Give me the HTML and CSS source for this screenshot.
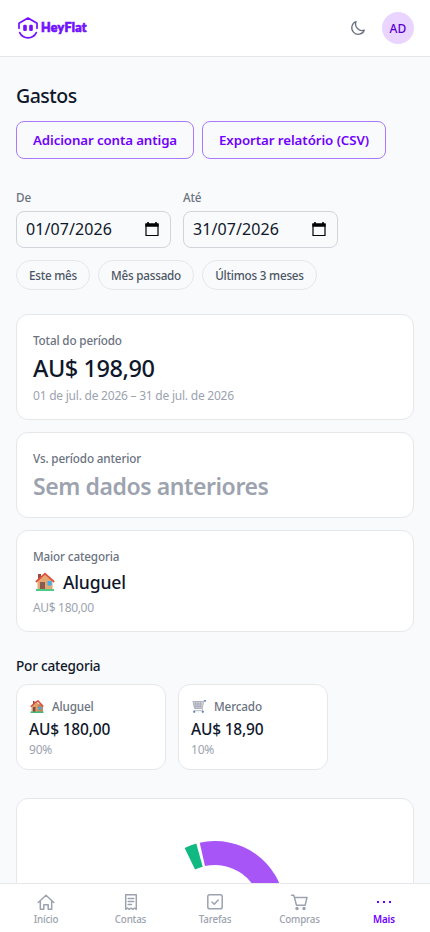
FILE: index.html
```html
<!DOCTYPE html>
<html lang="pt-BR">
<head>
<meta charset="utf-8">
<meta name="viewport" content="width=device-width, initial-scale=1">
<title>HeyFlat – Gastos</title>
<link rel="stylesheet" href="styles.css">
</head>
<body>
<svg class="defs" width="0" height="0" aria-hidden="true">
  <symbol id="calendar" viewBox="0 0 14 15"><path d="M1 2h12v11.500H1z" fill="none" stroke="#000" stroke-width="1.2"/><path d="M.4 1.4h13.2v3.4H.4zM2.2 0h1.6v2H2.2zM10.2 0h1.6v2h-1.6z"/></symbol>
</svg>
<div class="app">
  <header class="topbar">
    <div class="brand">
      <svg width="20" height="22" viewBox="0 0 20 22" fill="none" stroke="#7210ff" stroke-width="1.7" stroke-linecap="round" stroke-linejoin="round"><path d="M1 11.300V6.300L10 1l9 5.300v5"/><path d="M1.700 15.600C5.200 22.600 14.800 22.600 18.300 15.600"/><rect x="5.200" y="7.800" width="3.600" height="6.200" rx="1.200" fill="#7210ff" stroke="none"/><rect x="11.200" y="7.800" width="3.600" height="6.200" rx="1.200" fill="#7210ff" stroke="none"/></svg>
      <span class="brand-name">HeyFlat</span>
    </div>
    <div class="actions">
      <svg width="16" height="16" viewBox="0 0 16 16" fill="none" stroke="#6b7280" stroke-width="1.300" stroke-linejoin="round"><path d="M6 1.700A6.500 6.500 0 1 0 14.300 10.200 6.600 6.600 0 0 1 6 1.700Z"/></svg>
      <span class="avatar">AD</span>
    </div>
  </header>

  <main class="content">
    <h1>Gastos</h1>
    <div class="buttons">
      <button class="btn btn-add">Adicionar conta antiga</button>
      <button class="btn btn-export">Exportar relatório (CSV)</button>
    </div>

    <div class="dates">
      <div class="field"><span class="label">De</span><div class="date"><span>01/07/2026</span><svg width="14" height="15"><use href="#calendar"/></svg></div></div>
      <div class="field"><span class="label">Até</span><div class="date"><span>31/07/2026</span><svg width="14" height="15"><use href="#calendar"/></svg></div></div>
    </div>
    <div class="chips">
      <button class="chip chip-this">Este mês</button>
      <button class="chip chip-last">Mês passado</button>
      <button class="chip chip-quarter">Últimos 3 meses</button>
    </div>

    <section class="summary">
      <div class="card">
        <p class="label">Total do período</p>
        <p class="value">AU$ 198,90</p>
        <p class="note">01 de jul. de 2026 – 31 de jul. de 2026</p>
      </div>
      <div class="card">
        <p class="label">Vs. período anterior</p>
        <p class="value muted">Sem dados anteriores</p>
      </div>
      <div class="card">
        <p class="label">Maior categoria</p>
        <p class="top-category">
          <svg width="20" height="20" viewBox="0 0 20 20"><path d="M3 2h3v6H3z" fill="#9b4a42"/><path d="M2.500 9 10 2.500 17.500 9v9h-15z" fill="#e3a873"/><path d="M5 10h5v8H5z" fill="#8a5a50"/><path d="M12.500 9h4v4.500h-4z" fill="#39aef0"/><path d="M1.300 9.500 10 1.700l8.700 7.800" fill="none" stroke="#dd4f39" stroke-width="1.700" stroke-linecap="round"/><path d="M1 17h18v2H1z" fill="#4dcb83"/></svg>
          <span>Aluguel</span>
        </p>
        <p class="note money">AU$ 180,00</p>
      </div>
    </section>

    <h2>Por categoria</h2>
    <section class="categories">
      <div class="cat">
        <p class="cat-name"><svg width="14" height="13" viewBox="0 0 14 13"><path d="M3 1h1.500v3H3z" fill="#8b4240"/><path d="M1.500 6 6 2l6.500 4.500V12h-11z" fill="#dda06b"/><path d="M7.500 5.500 10 3.500l3 3V12H7.500z" fill="#c4875e"/><path d="M3 7h2.500v5H3z" fill="#7d4c45"/><path d="M8.500 6.800h2.500v3H8.500z" fill="#35aeee"/><path d="M.7 6.700 5.500 2.300 8 1l5.300 5.500" fill="none" stroke="#dc4b38" stroke-width="1.500"/><path d="M.5 11.500h13V13H.5z" fill="#42b978"/></svg><span class="label">Aluguel</span></p>
        <p class="cat-value">AU$ 180,00</p>
        <p class="note">90%</p>
      </div>
      <div class="cat">
        <p class="cat-name"><svg width="14" height="13" viewBox="0 0 14 13"><path d="M1 1.500h10L10 8.500H2.500z" fill="#d3d5dc"/><path d="M.8 1.500h10.400M1.500 4h9.300M2 6.300h8.500M3.500 1.500 4 8.500M6 1.500v7M8.500 1.500 8 8.500M1 1.500l1.500 7h7.700l1.600-7.700h1.500M10 8.500l.8 2.200H2" fill="none" stroke="#a5a7b2" stroke-width=".8"/><path d="M12 .2h2v1.300h-2z" fill="#3f73c9"/><circle cx="2.200" cy="11.800" r="1.100" fill="#5d7ebd"/><circle cx="10.800" cy="11.800" r="1.100" fill="#5d7ebd"/></svg><span class="label">Mercado</span></p>
        <p class="cat-value">AU$ 18,90</p>
        <p class="note">10%</p>
      </div>
    </section>

    <section class="chart">
      <svg width="140" height="140" viewBox="-70 -70 140 140"><path d="M-15.270-68.310A70 70 0 1 1 0 70V46A46 46 0 1 0-10.030-44.890Z" fill="#a855f7"/><path d="M-30.360-63.070A70 70 0 0 1-18.710-67.450L-12.290-44.330A46 46 0 0 0-19.950-41.450Z" fill="#10b981"/></svg>
    </section>
  </main>

  <nav class="tabs">
    <a class="tab"><svg width="20" height="20" viewBox="0 0 20 20"><path d="M2.200 10.500 10 3.200l7.800 7.300M4.300 8.800v8.400h3.500v-4.500h4.400v4.500h3.500V8.800"/></svg><span>Início</span></a>
    <a class="tab"><svg width="20" height="20" viewBox="0 0 20 20"><path d="M4.700 2.800h10.600v14.500l-1.800-1.300-1.700 1.300L10 16l-1.800 1.300L6.500 16l-1.800 1.300zM7.200 6.500h5.600M7.200 9.500h5.600M7.200 12.500h3.300"/></svg><span>Contas</span></a>
    <a class="tab"><svg width="20" height="20" viewBox="0 0 20 20"><rect x="2.800" y="2.800" width="14.400" height="14" rx="1.800"/><path d="m7 10 2.200 2.200L13.200 8"/></svg><span>Tarefas</span></a>
    <a class="tab"><svg width="20" height="20" viewBox="0 0 20 20"><path d="M1.500 3.200h2.300l2.700 10h8.700L17 5.500H4.500"/><circle cx="7" cy="16.400" r="1" fill="#9ca3af"/><circle cx="14" cy="16.400" r="1" fill="#9ca3af"/></svg><span>Compras</span></a>
    <a class="tab active"><svg width="20" height="20" viewBox="0 0 20 20"><path d="M3 9h2v2H3zM9 9h2v2H9zM15 9h2v2h-2z" fill="#7000ff" stroke="none"/></svg><span>Mais</span></a>
  </nav>
</div>
</body>
</html>
```
FILE: styles.css
```css
* { box-sizing: border-box; }
body { margin: 0; background: #f9fafc; color: #0f172a; font-family: "Noto Sans", "Open Sans", sans-serif; }
p, h1, h2 { margin: 0; }
button { font-family: inherit; background: transparent; padding: 0; margin: 0; white-space: nowrap; }
svg { display: block; flex: none; }
.defs { position: absolute; }
.app { height: 932px; display: flex; flex-direction: column; overflow: hidden; }

.topbar { flex: none; height: 57px; padding: 0 16px 0 18px; display: flex; align-items: center; justify-content: space-between; background: #fff; border-bottom: 1px solid #e5e7eb; }
.brand { display: flex; align-items: center; gap: 3px; }
.brand-name { font: 900 12.5px/20px Lato, sans-serif; letter-spacing: .3px; color: #7210ff; -webkit-text-stroke: .7px #7210ff; }
.actions { display: flex; align-items: center; gap: 16px; }
.avatar { width: 32px; height: 32px; border-radius: 50%; background: #e9d5ff; color: #5b00d0; font-size: 12px; font-weight: 500; line-height: 33px; text-align: center; letter-spacing: .2px; }

.content { flex: 1; min-height: 0; overflow: hidden; padding: 25px 16px 0; }
h1 { font-size: 19.5px; font-weight: 500; line-height: 28px; letter-spacing: -.5px; }
.buttons { display: flex; gap: 8px; margin-top: 11px; }
.btn { height: 38px; padding-bottom: 1px; border: 1px solid #a879ff; border-radius: 8px; color: #7000ff; font-size: 13.3px; font-weight: 600; }
.btn-add { width: 178px; letter-spacing: -.12px; }
.btn-export { width: 184px; letter-spacing: -.08px; }

.label { font-size: 11.7px; font-weight: 500; line-height: 16px; color: #6b7280; letter-spacing: -.15px; }
.dates { display: flex; gap: 12px; margin-top: 30px; }
.field { width: 155px; display: flex; flex-direction: column; gap: 6px; }
.date { height: 37px; padding: 0 11px 1px 9px; display: flex; align-items: center; justify-content: space-between; border: 1px solid #d1d5db; border-radius: 8px; font-size: 16px; letter-spacing: .1px; }
.chips { display: flex; gap: 8px; margin-top: 12px; }
.chip { height: 30px; border: 1px solid #e5e7eb; border-radius: 15px; color: #4b5563; font-size: 11.7px; font-weight: 500; letter-spacing: -.22px; }
.chip-this { width: 74px; }
.chip-last { width: 96px; }
.chip-quarter { width: 115px; }

.summary { display: flex; flex-direction: column; gap: 12px; margin-top: 24px; }
.card { padding: 17px 16px 15px; display: flex; flex-direction: column; gap: 4px; background: #fff; border: 1px solid #e5e7eb; border-radius: 12px; }
.value { font-size: 23.5px; font-weight: 500; line-height: 32px; letter-spacing: -.44px; }
.value.muted { color: #9ca3af; font-size: 23px; font-weight: 600; letter-spacing: -.42px; }
.note { font-size: 12px; line-height: 16px; color: #9ca3af; letter-spacing: -.23px; }
.note.money { letter-spacing: -.33px; }
.top-category { display: flex; align-items: center; gap: 8px; padding-left: 2px; font-size: 17.6px; font-weight: 500; line-height: 28px; letter-spacing: -.2px; }

h2 { margin-top: 24px; font-size: 13.6px; font-weight: 500; line-height: 20px; letter-spacing: -.22px; }
.categories { display: flex; gap: 12px; margin-top: 8px; }
.cat { width: 150px; height: 86px; padding: 13px 12px 11px; background: #fff; border: 1px solid #e5e7eb; border-radius: 12px; }
.cat-name { display: flex; align-items: center; gap: 8px; padding-left: 1px; }
.cat-value { margin-top: 3px; margin-bottom: 1px; font-size: 15.5px; font-weight: 500; line-height: 24px; letter-spacing: -.2px; }

.chart { height: 260px; margin-top: 28px; padding-top: 42px; display: flex; justify-content: center; background: #fff; border: 1px solid #e5e7eb; border-radius: 12px; }

.tabs { flex: none; height: 49px; display: grid; grid-template-columns: repeat(5, 84.5px); justify-content: center; background: #fff; border-top: 1px solid #e5e7eb; }
.tab { display: flex; flex-direction: column; align-items: center; padding-top: 8px; color: #9ca3af; font-size: 9.8px; font-weight: 500; line-height: 15px; letter-spacing: -.18px; }
.tab svg { fill: none; stroke: #9ca3af; stroke-width: 1.500; stroke-linejoin: round; stroke-linecap: round; }
.tab.active { color: #7000ff; font-weight: 600; letter-spacing: -.1px; }
```
